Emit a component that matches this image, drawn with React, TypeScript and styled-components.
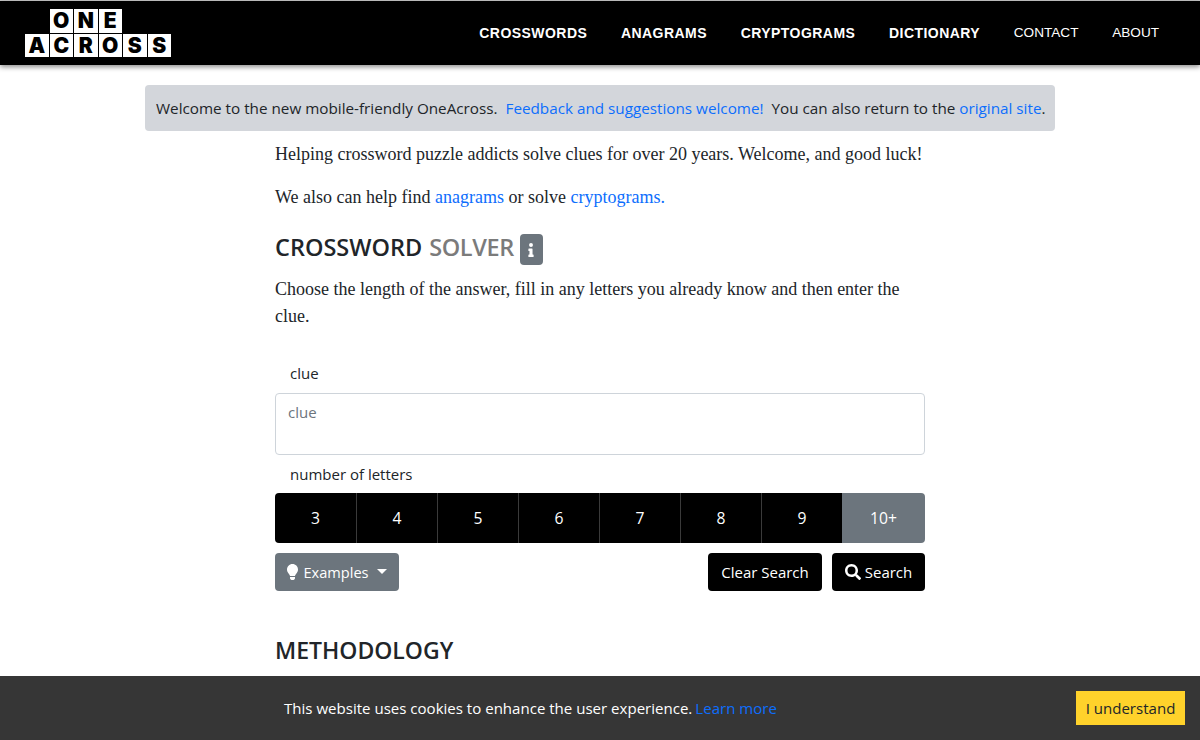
import React from "react";
import styled, { createGlobalStyle } from "styled-components";

const sans = `"Open Sans", "Noto Sans", sans-serif`;
const serif = `"Liberation Serif", "Times New Roman", serif`;

const Global = createGlobalStyle`
  html, body { margin: 0; padding: 0; height: 740px; overflow: hidden; background: #fff; }
  * { box-sizing: border-box; }
  a { color: #0d6efd; text-decoration: none; }
`;

const Page = styled.div`
  height: 740px;
  overflow: hidden;
  padding-top: 1px;
  background: linear-gradient(#c8c8c8 1px, #fff 1px);
`;
const Header = styled.header`
  height: 64px;
  background: #000;
  box-shadow: 0 2px 5px rgba(0, 0, 0, 0.45);
  display: flex;
  align-items: center;
  justify-content: space-between;
  padding: 0 41px 0 25px;
`;
const Logo = styled.div`
  display: flex;
  flex-direction: column;
  align-items: flex-start;
  gap: 1px;
`;
const LogoRow = styled.div<{ $indent?: number }>`
  display: flex;
  gap: 1px;
  margin-left: ${(p) => p.$indent ?? 0}px;
`;
const LogoCell = styled.span`
  width: 23.5px;
  height: 23.5px;
  background: #fff;
  color: #000;
  font-family: Inter, "DejaVu Sans", sans-serif;
  font-weight: 900;
  font-size: 21px;
  line-height: 23.5px;
  display: flex;
  align-items: center;
  justify-content: center;
`;
const Nav = styled.nav`
  display: flex;
  align-items: center;
  gap: 33.7px;
`;
const NavLink = styled.a<{ $bold?: boolean }>`
  color: #fff;
  font-family: "Liberation Sans", Arial, sans-serif;
  font-size: ${(p) => (p.$bold ? "14px" : "13.6px")};
  font-weight: ${(p) => (p.$bold ? 700 : 400)};
  letter-spacing: ${(p) => (p.$bold ? "0.45px" : "0")};
  margin-top: ${(p) => (p.$bold ? "0" : "-2px")};
`;
const Alert = styled.div`
  width: 910px;
  height: 46px;
  margin: 20px auto 0;
  background: #d3d6db;
  border-radius: 4px;
  color: #212529;
  padding: 0 11px;
  font-family: ${sans};
  font-size: 15.25px;
  line-height: 46px;
  white-space: pre;
`;
const Main = styled.main`
  width: 650px;
  margin: 0 auto;
`;
const Para = styled.p<{ $mt?: number }>`
  margin: ${(p) => p.$mt ?? 0}px 0 0;
  font-family: ${serif};
  font-size: 18px;
  line-height: 27px;
  color: #212529;
`;
const Heading = styled.h2<{ $mt?: number; $size?: number }>`
  margin: ${(p) => p.$mt ?? 0}px 0 0;
  font-family: ${sans};
  font-weight: 600;
  font-size: ${(p) => p.$size ?? 23}px;
  line-height: 32px;
  color: #212529;
  display: flex;
  align-items: center;
`;
const Muted = styled.span`
  color: #7b7b7b;
  margin-left: 7px;
  letter-spacing: -0.4px;
`;
const InfoBadge = styled.span`
  width: 23px;
  height: 31px;
  margin-left: 6px;
  margin-top: 5px;
  background: #6c757d;
  border-radius: 4px;
  display: inline-flex;
  align-items: center;
  justify-content: center;
`;
const FieldLabel = styled.div<{ $mt: number }>`
  margin-top: ${(p) => p.$mt}px;
  padding-left: 15px;
  font-family: ${sans};
  font-size: 15px;
  line-height: 24px;
  color: #212529;
`;
const ClueBox = styled.div`
  margin-top: 8px;
  height: 62px;
  border: 1px solid #ced4da;
  border-radius: 4px;
  padding: 8px 12px;
  font-family: ${sans};
  font-size: 15px;
  line-height: 20px;
  color: #6c757d;
`;
const LetterGroup = styled.div`
  margin-top: 7px;
  height: 50px;
  display: grid;
  grid-template-columns: repeat(7, 81px) 83px;
  border-radius: 4px;
  overflow: hidden;
`;
const LetterButton = styled.div<{ $active?: boolean }>`
  background: ${(p) => (p.$active ? "#6c757d" : "#000")};
  border-left: ${(p) => (p.$active ? "none" : "1px solid #3a3a3a")};
  &:first-child { border-left: none; }
  color: #fff;
  display: flex;
  align-items: center;
  justify-content: center;
  font-family: ${sans};
  font-size: 15.7px;
`;
const Actions = styled.div`
  margin-top: 10px;
  display: flex;
  align-items: center;
  gap: 10px;
`;
const Btn = styled.div<{ $grey?: boolean; $w: number }>`
  width: ${(p) => p.$w}px;
  height: 38px;
  border-radius: 4px;
  background: ${(p) => (p.$grey ? "#6c757d" : "#000")};
  color: #fff;
  display: flex;
  align-items: center;
  justify-content: center;
  gap: ${(p) => (p.$grey ? 5 : 4)}px;
  font-family: ${sans};
  font-size: ${(p) => (p.$grey ? 14.6 : 15)}px;
`;
const Spacer = styled.div`
  flex: 1;
`;
const Caret = styled.span`
  width: 0;
  height: 0;
  margin-left: 3px;
  margin-bottom: 2px;
  border-top: 5px solid #fff;
  border-left: 5px solid transparent;
  border-right: 5px solid transparent;
`;
const Cookie = styled.div`
  position: fixed;
  left: 0;
  right: 0;
  bottom: 0;
  height: 64px;
  background: #363636;
  color: #fff;
  display: flex;
  align-items: center;
  justify-content: space-between;
  padding: 0 15px 0 284px;
  font-family: ${sans};
  font-size: 15.05px;
`;
const CookieLink = styled.a`
  margin-left: 3px;
  color: #0d6efd;
`;
const CookieBtn = styled.div`
  width: 109px;
  height: 34px;
  background: #ffd22b;
  color: #212529;
  display: flex;
  align-items: center;
  justify-content: center;
`;

const Info = () => (
  <svg width="8" height="14" viewBox="0 0 192 512" fill="#fff">
    <path d="M20 424h20V293H20a20 20 0 0 1-20-20v-48a20 20 0 0 1 20-20h112a20 20 0 0 1 20 20v199h20a20 20 0 0 1 20 20v48a20 20 0 0 1-20 20H20a20 20 0 0 1-20-20v-48a20 20 0 0 1 20-20zM96 0a72 72 0 1 1 0 144A72 72 0 0 1 96 0z" />
  </svg>
);
const Bulb = () => (
  <svg width="11" height="16" viewBox="0 0 352 512" fill="#fff">
    <path d="M96 454c0 6 2 12 5 18l17 26c5 8 14 14 27 14h62c13 0 22-6 27-14l17-26c3-6 5-12 5-18v-38H96v38zM176 0C73 0 0 83 0 176c0 44 16 85 44 116 17 19 43 59 53 92h158c10-33 36-73 53-92 28-31 44-72 44-116C352 79 273 0 176 0z" />
  </svg>
);
const Lens = () => (
  <svg width="16" height="16" viewBox="0 0 512 512" fill="#fff">
    <path d="M505 443 405 343c-4-4-10-7-17-7h-16c28-35 44-80 44-128C416 93 323 0 208 0S0 93 0 208s93 208 208 208c48 0 93-16 128-44v16c0 7 3 13 7 17l100 100c9 9 25 9 34 0l28-28c9-10 9-25 0-34zM208 336a128 128 0 1 1 0-256 128 128 0 0 1 0 256z" />
  </svg>
);

export default function App() {
  return (
    <Page>
      <Global />
      <Header>
        <Logo>
          <LogoRow $indent={24.5}>
            {"ONE".split("").map((c, i) => <LogoCell key={i}>{c}</LogoCell>)}
          </LogoRow>
          <LogoRow>
            {"ACROSS".split("").map((c, i) => <LogoCell key={i}>{c}</LogoCell>)}
          </LogoRow>
        </Logo>
        <Nav>
          <NavLink $bold>CROSSWORDS</NavLink>
          <NavLink $bold>ANAGRAMS</NavLink>
          <NavLink $bold>CRYPTOGRAMS</NavLink>
          <NavLink $bold>DICTIONARY</NavLink>
          <NavLink>CONTACT</NavLink>
          <NavLink>ABOUT</NavLink>
        </Nav>
      </Header>
      <Alert>
        Welcome to the new mobile-friendly OneAcross.{"  "}
        <a>Feedback and suggestions welcome!</a>{"  "}You can also return to the{" "}
        <a>original site</a>.
      </Alert>
      <Main>
        <Para $mt={10}>Helping crossword puzzle addicts solve clues for over 20 years. Welcome, and good luck!</Para>
        <Para $mt={16}>We also can help find <a>anagrams</a> or solve <a>cryptograms.</a></Para>
        <Heading $mt={18} $size={23.5}>
          CROSSWORD<Muted>SOLVER</Muted>
          <InfoBadge><Info /></InfoBadge>
        </Heading>
        <Para $mt={11}>Choose the length of the answer, fill in any letters you already know and then enter the clue.</Para>
        <FieldLabel $mt={31}>clue</FieldLabel>
        <ClueBox>clue</ClueBox>
        <FieldLabel $mt={7}>number of letters</FieldLabel>
        <LetterGroup>
          {["3", "4", "5", "6", "7", "8", "9"].map((n) => <LetterButton key={n}>{n}</LetterButton>)}
          <LetterButton $active>10+</LetterButton>
        </LetterGroup>
        <Actions>
          <Btn $grey $w={124}><Bulb />Examples<Caret /></Btn>
          <Spacer />
          <Btn $w={114}>Clear Search</Btn>
          <Btn $w={93}><Lens />Search</Btn>
        </Actions>
        <Heading $mt={43}>METHODOLOGY</Heading>
      </Main>
      <Cookie>
        <span>This website uses cookies to enhance the user experience.<CookieLink>Learn more</CookieLink></span>
        <CookieBtn>I understand</CookieBtn>
      </Cookie>
    </Page>
  );
}
